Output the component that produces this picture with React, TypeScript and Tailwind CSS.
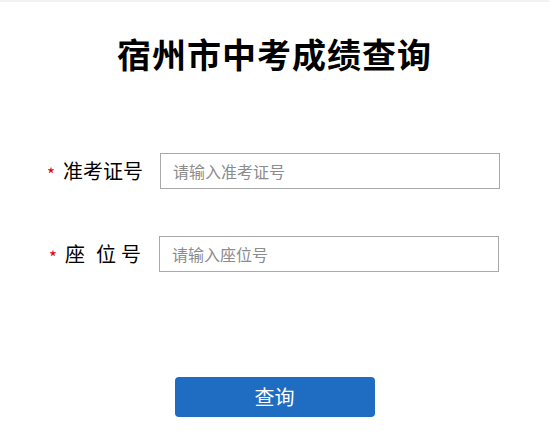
import { useState } from "react";

const font = { fontFamily: '"Noto Sans CJK SC", "Noto Sans", sans-serif' };

export default function App() {
  const [examNo, setExamNo] = useState("");
  const [seatNo, setSeatNo] = useState("");

  return (
    <div className="min-h-screen bg-white text-black" style={font}>
      <div className="h-[2px] bg-[#f2f2f2]" />

      {/* Title */}
      <h1 className="mt-[30px] text-center text-[34px] font-bold leading-[44px] tracking-[1px]">
        宿州市中考成绩查询
      </h1>

      {/* Form */}
      <div className="mt-[77px] flex flex-col gap-[47px]">
        <div className="flex items-center">
          <div className="flex w-[160px] shrink-0 items-center whitespace-nowrap pl-[47px]">
            <span className="mr-[8px] mt-[4px] text-[17px] leading-none text-[#e60012]">*</span>
            <span className="text-[20px] leading-none">准考证号</span>
          </div>
          <input
            type="text"
            value={examNo}
            onChange={(e) => setExamNo(e.target.value)}
            placeholder="请输入准考证号"
            className="h-[36px] w-[340px] border border-[#a9a9a9] px-[12px] text-[16px] outline-none placeholder:text-[#8c8c8c]"
          />
        </div>

        <div className="flex items-center">
          <div className="flex w-[159px] shrink-0 items-center whitespace-nowrap pl-[49px]">
            <span className="mr-[8px] mt-[4px] text-[17px] leading-none text-[#e60012]">*</span>
            <span className="text-[20px] leading-none">
              <span className="mr-[11px]">座</span>
              <span className="mr-[5px]">位</span>
              <span>号</span>
            </span>
          </div>
          <input
            type="text"
            value={seatNo}
            onChange={(e) => setSeatNo(e.target.value)}
            placeholder="请输入座位号"
            className="h-[36px] w-[340px] border border-[#a9a9a9] px-[12px] text-[16px] outline-none placeholder:text-[#8c8c8c]"
          />
        </div>
      </div>

      {/* Submit */}
      <div className="mt-[105px] flex justify-center">
        <button className="h-[40px] w-[200px] rounded-[4px] bg-[#1f6dc2] text-[20px] text-white">
          查询
        </button>
      </div>
    </div>
  );
}
